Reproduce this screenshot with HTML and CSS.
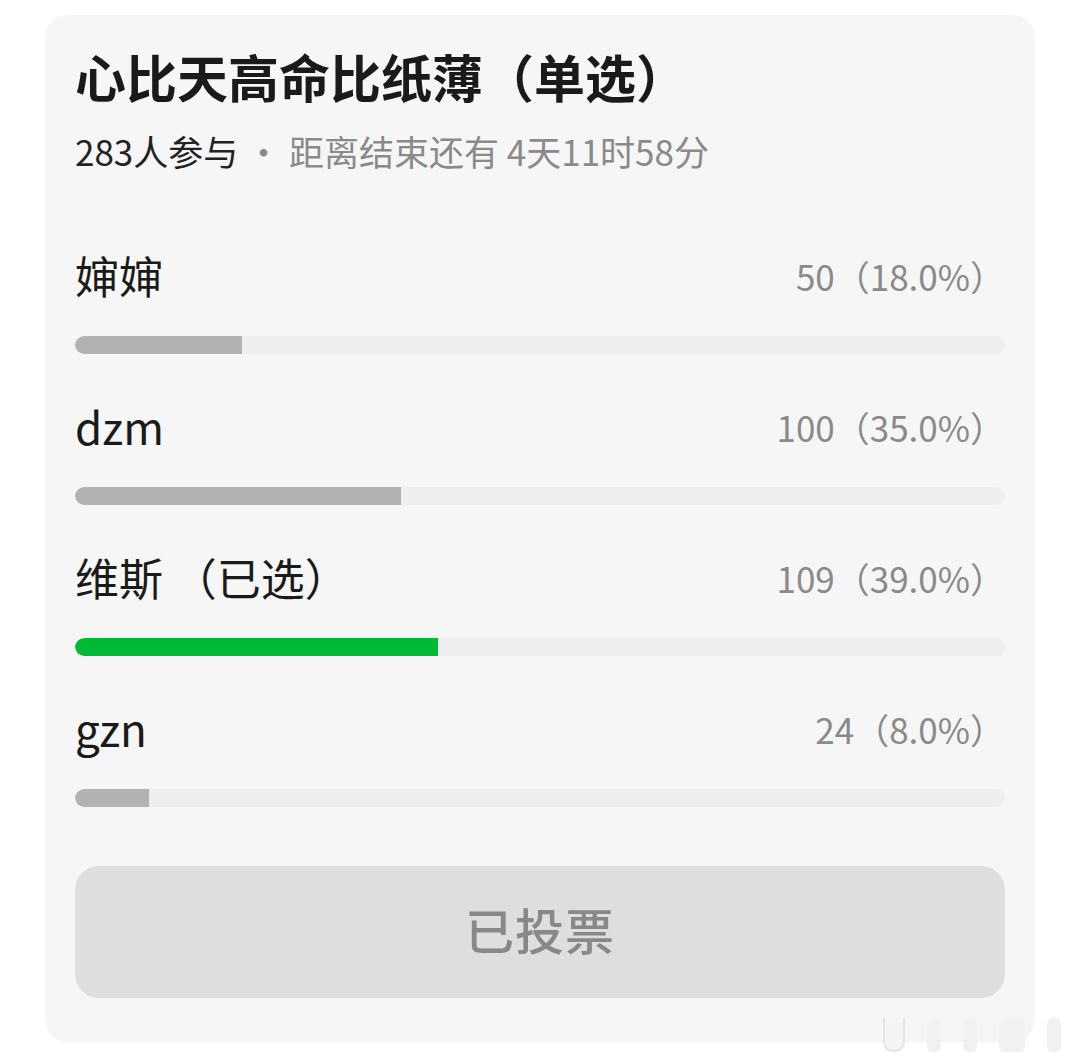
FILE: index.html
```html
<!DOCTYPE html>
<html lang="zh">
<head>
    <meta charset="UTF-8">
    <meta name="viewport" content="width=device-width, initial-scale=1.0">
    <title>投票</title>
    <link rel="stylesheet" href="styles.css">
</head>
<body>
    <div class="pollCard">
        <h1 class="pollTitle">心比天高命比纸薄（单选）</h1>
        <p class="pollMeta"><span class="joined">283人参与</span> · 距离结束还有 4天11时58分</p>

        <div class="optionList">
            <div class="option">
                <div class="optionRow">
                    <span class="optionName">婶婶</span>
                    <span class="optionCount">50（18.0%）</span>
                </div>
                <div class="bar"><div class="barFill" style="width: 18%"></div></div>
            </div>
            <div class="option">
                <div class="optionRow">
                    <span class="optionName">dzm</span>
                    <span class="optionCount">100（35.0%）</span>
                </div>
                <div class="bar"><div class="barFill" style="width: 35%"></div></div>
            </div>
            <div class="option">
                <div class="optionRow">
                    <span class="optionName">维斯 （已选）</span>
                    <span class="optionCount">109（39.0%）</span>
                </div>
                <div class="bar"><div class="barFill picked" style="width: 39%"></div></div>
            </div>
            <div class="option">
                <div class="optionRow">
                    <span class="optionName">gzn</span>
                    <span class="optionCount">24（8.0%）</span>
                </div>
                <div class="bar"><div class="barFill" style="width: 8%"></div></div>
            </div>
        </div>

        <button class="voteBtn" disabled>已投票</button>
    </div>

    <div class="watermark">
        <span class="wm wmA"></span>
        <span class="wm"></span>
        <span class="wm"></span>
        <span class="wm wmB"></span>
        <span class="wm"></span>
    </div>
</body>
</html>
```

FILE: styles.css
```css
body{
    margin: 0;
    background: #fff;
    font-family: "Noto Sans CJK SC", "Noto Sans", sans-serif;
    color: #1a1a1a;
    position: relative;
    height: 1063px;
    overflow: hidden;
}
.pollCard{
    margin: 15px 0 0 45px;
    width: 930px;
    height: 998px;
    padding: 29px 30px 0 30px;
    background: #f6f6f6;
    border-radius: 22px;
}
.pollTitle{
    margin: 0;
    font-size: 51px;
    line-height: 64px;
    font-weight: 700;
    color: #1a1a1a;
}
.pollMeta{
    margin: 23px 0 0 0;
    font-size: 35px;
    line-height: 40px;
    color: #8a8a8a;
}
.pollMeta .joined{
    color: #222;
}
.optionList{
    margin-top: 76px;
    display: flex;
    flex-direction: column;
    gap: 44px;
}
.optionRow{
    display: flex;
    justify-content: space-between;
    align-items: center;
    height: 56px;
}
.optionName{
    font-size: 44px;
    color: #1a1a1a;
}
.optionCount{
    font-size: 35px;
    color: #8a8a8a;
}
.bar{
    margin-top: 33px;
    height: 18px;
    border-radius: 9px;
    background: #eeeeee;
    overflow: hidden;
}
.barFill{
    height: 100%;
    background: #b2b2b2;
    border-radius: 9px 0 0 9px;
}
.barFill.picked{
    background: #00b934;
}
.voteBtn{
    display: block;
    width: 100%;
    height: 132px;
    margin-top: 59px;
    padding-bottom: 8px;
    border: none;
    border-radius: 24px;
    background: #dedede;
    color: #888;
    font-family: inherit;
    font-size: 49px;
    font-weight: 500;
    letter-spacing: 1px;
}
.watermark{
    position: absolute;
    right: 18px;
    top: 1018px;
    display: flex;
    gap: 22px;
    align-items: flex-end;
}
.wm{
    width: 14px;
    height: 34px;
    border-radius: 6px;
    background: #f1f1f1;
}
.wmA{
    border: 2px solid #e4e4e4;
    border-top: none;
    border-radius: 0 0 10px 10px;
    width: 18px;
    height: 32px;
    background: #f4f4f4;
}
.wmB{
    width: 26px;
}
```
